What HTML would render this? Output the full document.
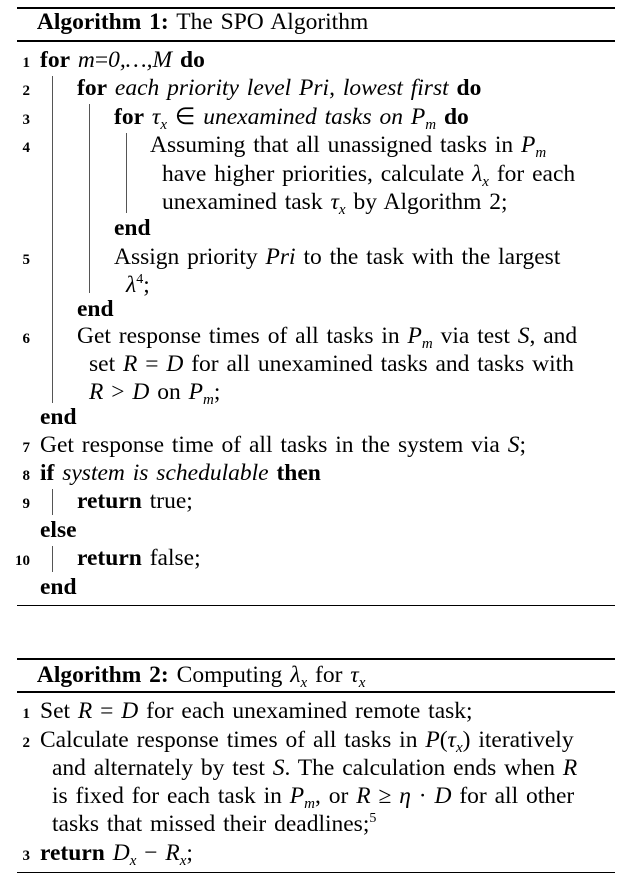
<!DOCTYPE html>
<html><head><meta charset="utf-8"><style>
body{margin:0;width:633px;height:875px;background:#fff;position:relative;overflow:hidden;font-family:"Liberation Serif",serif;font-size:23.5px;color:#000}
.r{position:absolute;left:17px;width:598px;background:#000}
.l{position:absolute;white-space:nowrap;line-height:28px;height:28px;word-spacing:2px}
.n{position:absolute;font-weight:bold;line-height:28px;width:30px;text-align:right;font-size:23.5px}
.n span{font-size:15px}
.b{position:absolute;width:1px;background:#555}
i{font-style:italic}
s{text-decoration:none;font-size:15px;position:relative;top:5px;line-height:0;font-style:italic}
u{text-decoration:none;font-size:14px;position:relative;top:-9px;line-height:0}
</style></head><body>
<div class="r" style="top:7px;height:2px"></div>
<div class="l" style="left:29px;top:8px">&nbsp;<b>Algorithm 1:</b> The SPO Algorithm</div>
<div class="r" style="top:40px;height:2px"></div>

<div class="n" style="left:0;top:46px"><span>1</span></div>
<div class="l" style="left:40px;top:46px"><b>for</b> <i>m</i>=<i>0,…,M</i> <b>do</b></div>
<div class="n" style="left:0;top:74px"><span>2</span></div>
<div class="l" style="left:77px;top:74px"><b>for</b> <i>each priority level Pri, lowest first</i> <b>do</b></div>
<div class="n" style="left:0;top:103px"><span>3</span></div>
<div class="l" style="left:114px;top:103px"><b>for</b> <i>τ</i><s>x</s> ∈ <i>unexamined tasks on P</i><s>m</s> <b>do</b></div>
<div class="n" style="left:0;top:131px"><span>4</span></div>
<div class="l" style="left:150px;top:131px">Assuming that all unassigned tasks in <i>P</i><s>m</s></div>
<div class="l" style="left:162px;top:160px">have higher priorities, calculate <i>λ</i><s>x</s> for each</div>
<div class="l" style="left:162px;top:188px">unexamined task <i>τ</i><s>x</s> by Algorithm 2;</div>
<div class="l" style="left:114px;top:214px"><b>end</b></div>
<div class="n" style="left:0;top:243px"><span>5</span></div>
<div class="l" style="left:114px;top:243px">Assign priority <i>Pri</i> to the task with the largest</div>
<div class="l" style="left:126px;top:271px"><i>λ</i><u>4</u>;</div>
<div class="l" style="left:77px;top:295px"><b>end</b></div>
<div class="n" style="left:0;top:322px"><span>6</span></div>
<div class="l" style="left:77px;top:322px">Get response times of all tasks in <i>P</i><s>m</s> via test <i>S</i>, and</div>
<div class="l" style="left:89px;top:350px">set <i>R</i> = <i>D</i> for all unexamined tasks and tasks with</div>
<div class="l" style="left:89px;top:378px"><i>R</i> &gt; <i>D</i> on <i>P</i><s>m</s>;</div>
<div class="l" style="left:40px;top:403px"><b>end</b></div>
<div class="n" style="left:0;top:431px"><span>7</span></div>
<div class="l" style="left:40px;top:431px">Get response time of all tasks in the system via <i>S</i>;</div>
<div class="n" style="left:0;top:459px"><span>8</span></div>
<div class="l" style="left:40px;top:459px"><b>if</b> <i>system is schedulable</i> <b>then</b></div>
<div class="n" style="left:0;top:487px"><span>9</span></div>
<div class="l" style="left:77px;top:487px"><b>return</b> true;</div>
<div class="l" style="left:40px;top:516px"><b>else</b></div>
<div class="n" style="left:0;top:544px"><span>10</span></div>
<div class="l" style="left:77px;top:544px"><b>return</b> false;</div>
<div class="l" style="left:40px;top:573px"><b>end</b></div>
<div class="r" style="top:605px;height:1px"></div>

<div class="b" style="left:52px;top:76px;height:327px"></div>
<div class="b" style="left:89px;top:104px;height:189px"></div>
<div class="b" style="left:126px;top:133px;height:80px"></div>
<div class="b" style="left:52px;top:489px;height:26px"></div>
<div class="b" style="left:52px;top:546px;height:26px"></div>

<div class="r" style="top:658px;height:2px"></div>
<div class="l" style="left:29px;top:661px">&nbsp;<b>Algorithm 2:</b> Computing <i>λ</i><s>x</s> for <i>τ</i><s>x</s></div>
<div class="r" style="top:691px;height:2px"></div>
<div class="n" style="left:0;top:697px"><span>1</span></div>
<div class="l" style="left:40px;top:697px">Set <i>R</i> = <i>D</i> for each unexamined remote task;</div>
<div class="n" style="left:0;top:726px"><span>2</span></div>
<div class="l" style="left:40px;top:726px">Calculate response times of all tasks in <i>P</i>(<i>τ</i><s>x</s>) iteratively</div>
<div class="l" style="left:52px;top:754px">and alternately by test <i>S</i>. The calculation ends when <i>R</i></div>
<div class="l" style="left:52px;top:782px">is fixed for each task in <i>P</i><s>m</s>, or <i>R</i> ≥ <i>η</i> · <i>D</i> for all other</div>
<div class="l" style="left:52px;top:810px">tasks that missed their deadlines;<u>5</u></div>
<div class="n" style="left:0;top:839px"><span>3</span></div>
<div class="l" style="left:40px;top:839px"><b>return</b> <i>D</i><s>x</s> − <i>R</i><s>x</s>;</div>
<div class="r" style="top:872px;height:1px"></div>
</body></html>
